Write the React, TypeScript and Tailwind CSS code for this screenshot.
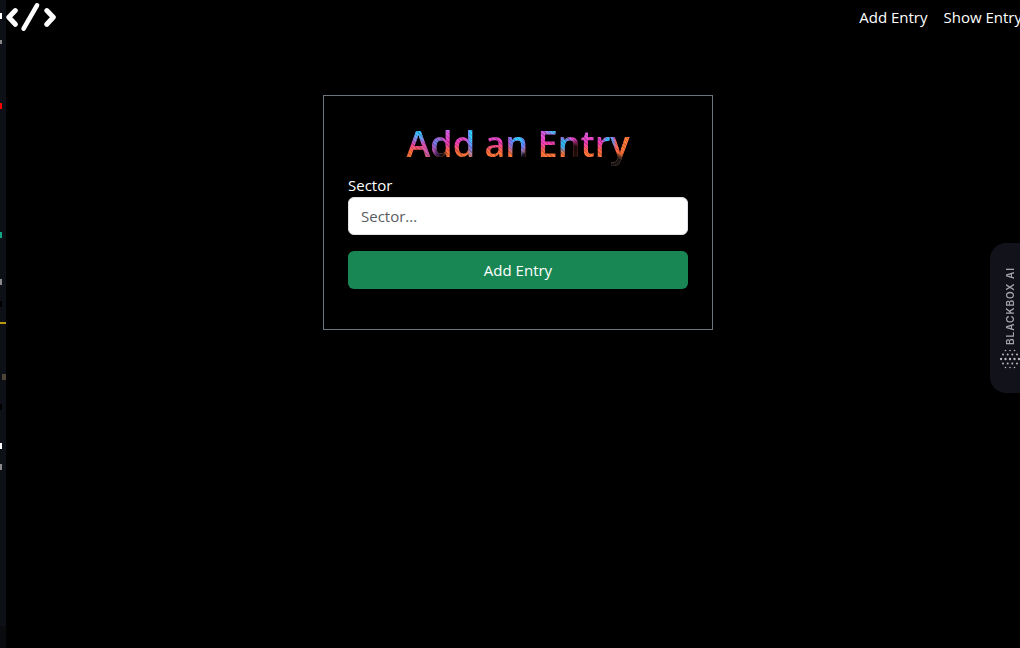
import React from "react";

const marks = [
  { x: 0, y: 13, w: 2, h: 6, fill: "#ffffff" },
  { x: 0, y: 40, w: 2, h: 4, fill: "#8a8a8a" },
  { x: 0, y: 103, w: 2, h: 6, fill: "#ff0000" },
  { x: 0, y: 232, w: 2, h: 6, fill: "#12a583" },
  { x: 0, y: 279, w: 2, h: 6, fill: "#8a8a8a" },
  { x: 0, y: 301, w: 2, h: 6, fill: "#000000" },
  { x: 0, y: 322, w: 6, h: 2, fill: "#b8980f" },
  { x: 2, y: 374, w: 4, h: 6, fill: "#4d4436" },
  { x: 0, y: 404, w: 2, h: 6, fill: "#000000" },
  { x: 0, y: 443, w: 2, h: 6, fill: "#ffffff" },
  { x: 0, y: 464, w: 2, h: 6, fill: "#8a8a8a" },
  { x: 0, y: 626, w: 6, h: 22, fill: "#0a0b0f" },
];

function EdgeStrip() {
  return (
    <aside className="w-1.5 shrink-0 bg-[#0d1017]" aria-hidden="true">
      <svg width="6" height="648" className="block" shapeRendering="crispEdges">
        {marks.map((m) => (
          <rect key={m.y} x={m.x} y={m.y} width={m.w} height={m.h} fill={m.fill} />
        ))}
      </svg>
    </aside>
  );
}

function Logo() {
  return (
    <svg width="50" height="34" viewBox="0 0 50 34" fill="none" stroke="#fff" strokeWidth="5" strokeLinecap="round" strokeLinejoin="round">
      <path d="M9.3 10.6 2.8 17.3l6.5 7M40.8 10.6l6.5 6.7-6.5 7" />
      <path d="M31 5.3 17.6 28.7" strokeWidth="4.6" />
    </svg>
  );
}

const dotRows = [
  { y: 1.5, xs: [5.5, 10, 14.5], r: 0.8 },
  { y: 5.5, xs: [3, 7.7, 12.3, 17], r: 1 },
  { y: 10, xs: [1, 5.5, 10, 14.5, 19], r: 1.2 },
  { y: 14.5, xs: [3, 7.7, 12.3, 17], r: 1 },
  { y: 18.5, xs: [5.5, 10, 14.5], r: 0.8 },
];

function BlackboxTab() {
  return (
    <button
      type="button"
      className="absolute right-0 top-[243px] flex h-[150px] w-[30px] flex-col items-end justify-end gap-1 rounded-l-2xl bg-[#11121a] pb-6 font-['Inter',sans-serif] text-[10px] font-semibold leading-5 tracking-widest text-[#a4a4a9]"
    >
      <span className="rotate-180 [writing-mode:vertical-rl]">BLACKBOX AI</span>
      <svg width="20" height="20" viewBox="0 0 20 20" fill="#b9b9bb" aria-hidden="true">
        {dotRows.map((row) =>
          row.xs.map((x) => <circle key={`${x}-${row.y}`} cx={x} cy={row.y} r={row.r} />)
        )}
      </svg>
    </button>
  );
}

export default function App() {
  return (
    <div className="relative flex min-h-screen overflow-hidden bg-black font-['Open_Sans','Noto_Sans',sans-serif] text-[15px] leading-6 text-white">
      <EdgeStrip />
      <div className="-mr-2.5 flex min-w-0 flex-1 flex-col">
        <header className="flex items-start justify-between">
          <a href="#home" aria-label="Home">
            <Logo />
          </a>
          <nav className="flex gap-4 pr-2 pt-[5px]">
            <a href="#add">Add Entry</a>
            <a href="#show">Show Entry</a>
          </nav>
        </header>
        <main className="flex justify-center pt-[61px]">
          <form className="w-[390px] border border-[#6c757d] px-6 pb-10 pt-6" onSubmit={(e) => e.preventDefault()}>
            <h1 className="mb-[5px] text-center text-[36px] font-semibold leading-[48px]">
              <span className="inline-block bg-[repeating-linear-gradient(45deg,#00000030_0px_1px,transparent_1px_3px),radial-gradient(ellipse_18px_14px_at_14px_12px,#37c0ff_20%,transparent),radial-gradient(circle_12px_at_24px_31px,#b84fe0,transparent),radial-gradient(circle_9px_at_33px_35px,#101018_40%,transparent),radial-gradient(circle_10px_at_31px_24px,#3899f0,transparent),radial-gradient(ellipse_7px_30px_at_66px_12px,#2cd5ff_20%,#6a8fff_50%,transparent),radial-gradient(ellipse_12px_18px_at_112px_20px,#32caff_20%,#5888ff_50%,transparent),radial-gradient(circle_8px_at_118px_38px,#100c16_50%,transparent),radial-gradient(ellipse_13px_8px_at_150px_10px,#35cdff_20%,transparent),radial-gradient(circle_10px_at_158px_24px,#31b3ee_30%,transparent),radial-gradient(ellipse_8px_14px_at_170px_32px,#1c0c0c_40%,transparent),radial-gradient(ellipse_7px_13px_at_203px_24px,#25c9ff_40%,transparent),radial-gradient(ellipse_14px_12px_at_209px_44px,#17171b_50%,transparent),radial-gradient(circle_11px_at_218px_22px,#ff7b35_60%,transparent),linear-gradient(#d065f0_20%,#f03ab5_48%,#ff6c3b_66%,#ff9536)] bg-clip-text text-transparent">
                Add an Entry
              </span>
            </h1>
            <label htmlFor="sector" className="block">
              Sector
            </label>
            <input
              id="sector"
              type="text"
              placeholder="Sector..."
              className="mb-4 block h-[38px] w-full rounded-md border border-[#dee2e6] bg-white px-3 text-[#212529] placeholder:text-[#595c5f]"
            />
            <button type="submit" className="block h-[38px] w-full rounded-md bg-[#198754] text-white">
              Add Entry
            </button>
          </form>
        </main>
      </div>
      <BlackboxTab />
    </div>
  );
}
